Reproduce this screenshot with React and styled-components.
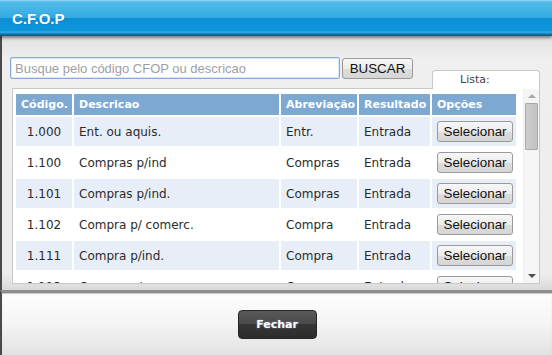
import React from "react";
import styled, { createGlobalStyle } from "styled-components";

const GlobalStyle = createGlobalStyle`
  html, body {
    margin: 0;
    padding: 0;
    background: #ffffff;
  }
  * {
    box-sizing: border-box;
  }
`;

const Dialog = styled.div`
  width: 552px;
  height: 355px;
  display: flex;
  flex-direction: column;
  overflow: hidden;
  font-family: "DejaVu Sans", Verdana, sans-serif;
`;

const TitleBar = styled.div`
  flex: none;
  height: 36px;
  display: flex;
  align-items: center;
  padding-left: 12px;
  position: relative;
  z-index: 2;
  background: linear-gradient(
    #9ad8f4 0,
    #52bcea 2px,
    #32aae2 18px,
    #0b8fd5 18px,
    #0d96da 31px,
    #3eb1e6 32px,
    #0678b8 34px,
    #1d4e6c 36px
  );
  box-shadow: 0 2px 3px rgba(0, 0, 0, 0.45);
`;

const Title = styled.h1`
  margin: 0;
  font-family: "Liberation Sans", Arial, sans-serif;
  font-size: 15px;
  font-weight: bold;
  color: #ffffff;
  text-shadow: 0 0 1px rgba(0, 60, 110, 0.5);
`;

const Body = styled.div`
  flex: 1;
  display: flex;
  flex-direction: column;
  padding: 21px 12px 0 10px;
  border-left: 2px solid #4a4a4a;
  background: linear-gradient(#e2e2e2 0, #efefef 24px, #ededed 238px, #d9d9d9 100%);
`;

const TopRow = styled.div`
  display: flex;
  justify-content: space-between;
  height: 31px;
  margin-left: -2px;
`;

const Search = styled.div`
  display: flex;
  align-items: flex-start;
  gap: 2px;
`;

const SearchInput = styled.input`
  width: 330px;
  height: 22px;
  padding: 0 4px;
  border: 1px solid #86a9d9;
  border-radius: 2px;
  box-shadow: inset 0 0 0 1px #dbe7f7;
  background: #ffffff;
  font-family: "Liberation Sans", Arial, sans-serif;
  font-size: 13px;
  color: #222;
  outline: none;

  &::placeholder {
    color: #a0a0a0;
  }
`;

const GrayButton = styled.button`
  width: ${(p) => p.w}px;
  height: 21px;
  margin-top: ${(p) => p.top || 0}px;
  padding: 0;
  border: 1px solid #9a9a9a;
  border-radius: 3px;
  background: linear-gradient(#f7f7f7 0, #ececec 50%, #dddddd 51%, #d6d6d6 100%);
  font-family: "Liberation Sans", Arial, sans-serif;
  font-size: 13.33px;
  color: #111;
  cursor: pointer;
`;

const Tab = styled.div`
  align-self: flex-end;
  position: relative;
  z-index: 1;
  width: 108px;
  height: 19px;
  margin-bottom: -1px;
  padding-left: 27px;
  border: 1px solid #c8c8c8;
  border-bottom: none;
  border-radius: 4px 4px 0 0;
  background: #ffffff;
  font-size: 11px;
  line-height: 18px;
  color: #444;
`;

const Panel = styled.div`
  height: 196px;
  display: flex;
  border: 1px solid #c9c9c9;
  background: #ffffff;
`;

const Scroller = styled.div`
  flex: 1;
  height: 100%;
  overflow: hidden;
`;

const ScrollBar = styled.div`
  flex: none;
  width: 16px;
  display: flex;
  flex-direction: column;
  align-items: center;
  background: #f5f5f5;
  border-left: 1px solid #ededed;
`;

const Arrow = styled.div`
  flex: none;
  height: 14px;
  width: 100%;
  display: flex;
  align-items: center;
  justify-content: center;

  &::before {
    content: "";
    border-left: 4px solid transparent;
    border-right: 4px solid transparent;
    ${(p) =>
      p.down
        ? "border-top: 4px solid #4c4c4c;"
        : "border-bottom: 4px solid #a8a8a8;"}
  }
`;

const Track = styled.div`
  flex: 1;
  width: 100%;
  padding: 0 1px;
`;

const Thumb = styled.div`
  height: 47px;
  border: 1px solid #a9a9a9;
  border-radius: 1px;
  background: linear-gradient(90deg, #cdcdcd, #c2c2c2);
`;

const Table = styled.table`
  table-layout: fixed;
  width: 504px;
  margin: 3px 0 0 1px;
  border-spacing: 2px;
`;

const Head = styled.th`
  height: 21px;
  padding: 0 0 0 5px;
  background: #7ca8d2;
  color: #ffffff;
  font-size: 11px;
  font-weight: bold;
  text-align: left;
  white-space: nowrap;
  overflow: hidden;
`;

const Row = styled.tr`
  background: ${(p) => (p.odd ? "#ffffff" : "#e8eef7")};
`;

const Cell = styled.td`
  height: 29px;
  padding: 0 0 0 ${(p) => (p.center ? 0 : 5)}px;
  text-align: ${(p) => (p.center ? "center" : "left")};
  font-size: 12px;
  color: #2b2b2b;
  white-space: nowrap;
  overflow: hidden;
`;

const Footer = styled.div`
  flex: none;
  height: 65px;
  display: flex;
  justify-content: center;
  padding-top: 17px;
  border-left: 2px solid #4a4a4a;
  border-top: 3px solid #8e8e8e;
  box-shadow: inset 0 1px 1px #c8c8c8;
  background: linear-gradient(#fdfdfd 0, #f5f5f5 30px, #e2e2e2 100%);
`;

const CloseButton = styled.button`
  width: 79px;
  height: 29px;
  padding: 0;
  border: 1px solid #262626;
  border-radius: 4px;
  background: linear-gradient(#595959 0, #4a4a4a 48%, #363636 50%, #2c2c2c 100%);
  color: #ffffff;
  font-family: "DejaVu Sans", Verdana, sans-serif;
  font-size: 11px;
  font-weight: bold;
  text-shadow: 0 0 2px rgba(160, 190, 255, 0.6);
  cursor: pointer;
`;

const cfops = [
  ["1.000", "Ent. ou aquis.", "Entr.", "Entrada"],
  ["1.100", "Compras p/ind", "Compras", "Entrada"],
  ["1.101", "Compras p/ind.", "Compras", "Entrada"],
  ["1.102", "Compra p/ comerc.", "Compra", "Entrada"],
  ["1.111", "Compra p/ind.", "Compra", "Entrada"],
  ["1.113", "Compra p/ comerc.", "Compra", "Entrada"],
  ["1.116", "Compra p/ind. ent. fut.", "Compra", "Entrada"],
  ["1.117", "Compra p/ comerc. fut.", "Compra", "Entrada"],
  ["1.118", "Compra merc. entr. terc.", "Compra", "Entrada"],
  ["1.120", "Compra p/ind. venda ord.", "Compra", "Entrada"],
];

const App = () => {
  return (
    <Dialog>
      <GlobalStyle />
      <TitleBar>
        <Title>C.F.O.P</Title>
      </TitleBar>
      <Body>
        <TopRow>
          <Search>
            <SearchInput placeholder="Busque pelo código CFOP ou descricao" />
            <GrayButton w={71} top={1}>BUSCAR</GrayButton>
          </Search>
          <Tab>Lista:</Tab>
        </TopRow>
        <Panel>
          <Scroller>
            <Table>
              <colgroup>
                <col style={{ width: 56 }} />
                <col style={{ width: 205 }} />
                <col style={{ width: 76 }} />
                <col style={{ width: 71 }} />
                <col style={{ width: 84 }} />
              </colgroup>
              <thead>
                <tr>
                  <Head>Código.</Head>
                  <Head>Descricao</Head>
                  <Head>Abreviação</Head>
                  <Head>Resultado</Head>
                  <Head>Opções</Head>
                </tr>
              </thead>
              <tbody>
                {cfops.map((c, i) => (
                  <Row key={c[0]} odd={i % 2 === 1}>
                    <Cell center>{c[0]}</Cell>
                    <Cell>{c[1]}</Cell>
                    <Cell>{c[2]}</Cell>
                    <Cell>{c[3]}</Cell>
                    <Cell>
                      <GrayButton w={76}>Selecionar</GrayButton>
                    </Cell>
                  </Row>
                ))}
              </tbody>
            </Table>
          </Scroller>
          <ScrollBar>
            <Arrow />
            <Track>
              <Thumb />
            </Track>
            <Arrow down />
          </ScrollBar>
        </Panel>
      </Body>
      <Footer>
        <CloseButton>Fechar</CloseButton>
      </Footer>
    </Dialog>
  );
};

export default App;
